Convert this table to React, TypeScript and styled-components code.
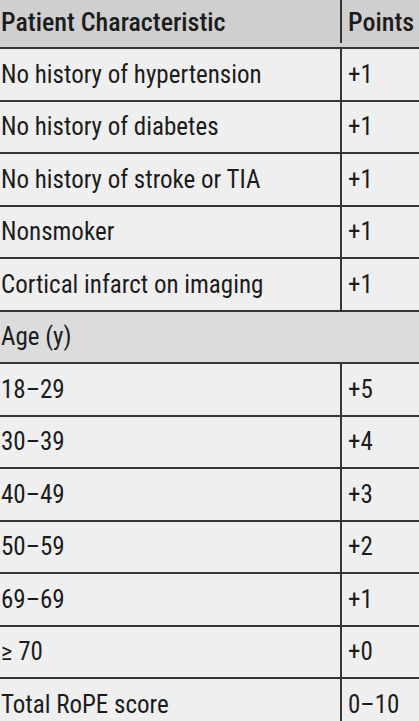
import React from "react";
import styled, { createGlobalStyle } from "styled-components";

type Item = {
  label: string;
  points?: string;
  section?: boolean;
};

const items: Item[] = [
  { label: "No history of hypertension", points: "+1" },
  { label: "No history of diabetes", points: "+1" },
  { label: "No history of stroke or TIA", points: "+1" },
  { label: "Nonsmoker", points: "+1" },
  { label: "Cortical infarct on imaging", points: "+1" },
  { label: "Age (y)", section: true },
  { label: "18–29", points: "+5" },
  { label: "30–39", points: "+4" },
  { label: "40–49", points: "+3" },
  { label: "50–59", points: "+2" },
  { label: "69–69", points: "+1" },
  { label: "≥ 70", points: "+0" },
  { label: "Total RoPE score", points: "0–10" },
];

export default function App() {
  return (
    <>
      <GlobalStyle />
      <Table>
        <HeaderRow>
          <LabelCell>Patient Characteristic</LabelCell>
          <PointsCell>Points</PointsCell>
        </HeaderRow>
        {items.map((item) =>
          item.section ? (
            <SectionRow key={item.label}>{item.label}</SectionRow>
          ) : (
            <Row key={item.label}>
              <LabelCell>{item.label}</LabelCell>
              <PointsCell>{item.points}</PointsCell>
            </Row>
          )
        )}
      </Table>
    </>
  );
}

const GlobalStyle = createGlobalStyle`
  html, body {
    margin: 0;
    padding: 0;
    background: #efeff0;
    overflow: hidden;
  }
  body {
    font-family: "Roboto Condensed", "Liberation Sans Narrow", "Roboto", sans-serif;
    color: #1c1c1c;
  }
`;

const Table = styled.div`
  width: 419px;
  height: 721px;
  overflow: hidden;
  display: flex;
  flex-direction: column;
`;

const Row = styled.div`
  flex: none;
  box-sizing: border-box;
  height: 52.5px;
  display: grid;
  grid-template-columns: 342px 1fr;
  border-bottom: 2px solid #353535;
  background: #efeff0;
  font-size: 25px;
  line-height: 1;
`;

const HeaderRow = styled(Row)`
  height: 49px;
  background: #cfcfcf;
  font-size: 26px;
  font-weight: 500;
  padding-bottom: 4px;
`;

const SectionRow = styled.div`
  flex: none;
  box-sizing: border-box;
  height: 52.5px;
  display: flex;
  align-items: center;
  padding-left: 1px;
  background: #dcdcdc;
  border-bottom: 2px solid #353535;
  font-size: 25px;
  line-height: 1;
`;

const LabelCell = styled.div`
  display: flex;
  align-items: center;
  padding-left: 1px;
  border-right: 2px solid #353535;
  white-space: nowrap;
  overflow: hidden;
`;

const PointsCell = styled.div`
  display: flex;
  align-items: center;
  padding-left: 6px;
  white-space: nowrap;
`;
